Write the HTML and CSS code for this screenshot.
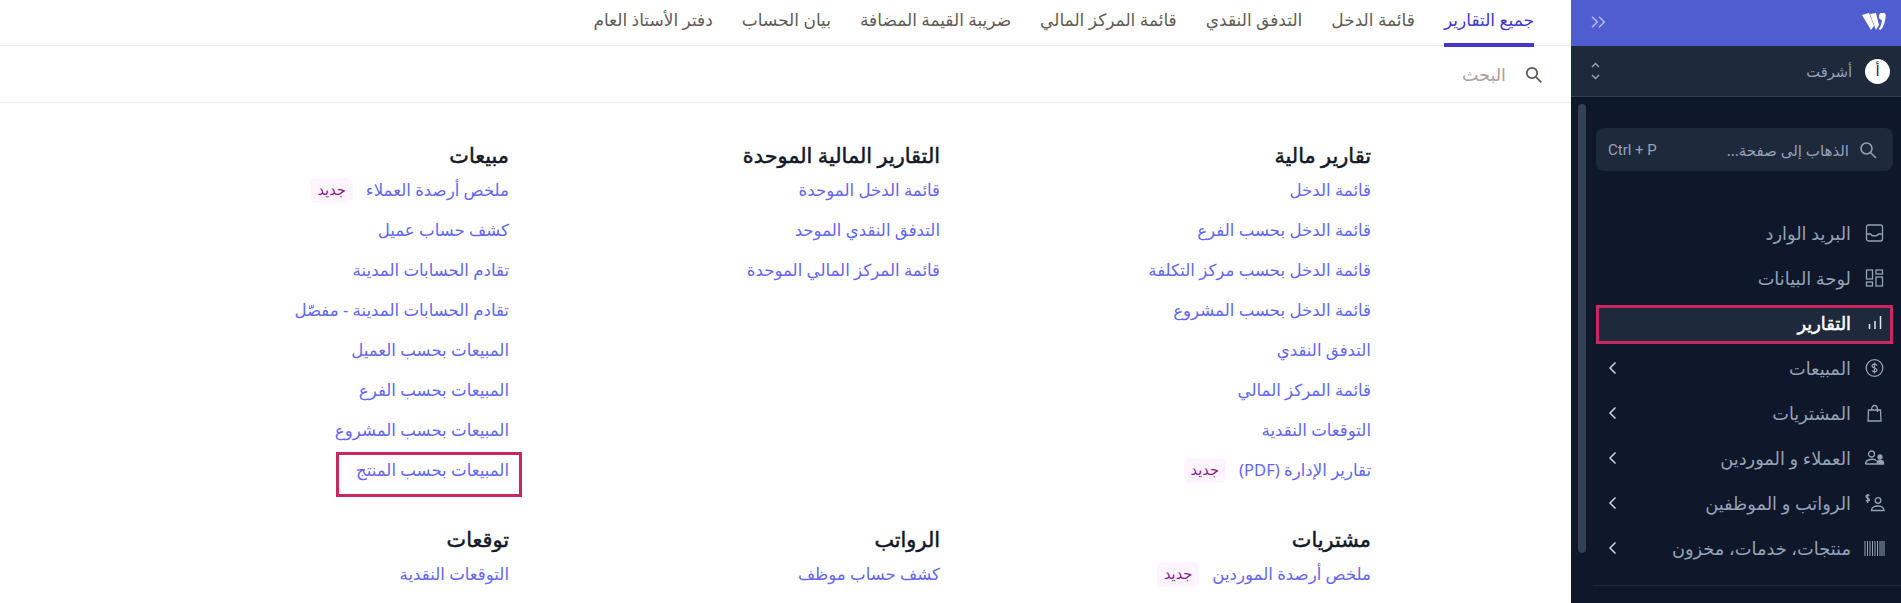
FILE: index.html
```html
<!DOCTYPE html>
<html lang="ar" dir="rtl">
<head>
  <meta charset="UTF-8">
  <meta name="viewport" content="width=device-width, initial-scale=1.0">
  <title>التقارير</title>
  <link rel="stylesheet" href="styles.css">
</head>
<body>
  <aside class="sidebar">
    <div class="brand">
      <svg class="logo" width="24" height="18" viewBox="0 0 24 18" fill="#fff"><path d="M0 2 7 0l5 13-3 4zM8 1l6-1 3 12-3 5zM17 3a3.4 3.4 0 1 1 6.600 1c-.6 5-2 10-5 13l-2-1c2-2 3-5 3.400-9A3.400 3.400 0 0 1 17 3z"/></svg>
      <svg class="collapse" width="15" height="12" viewBox="0 0 15 12" fill="none" stroke="#b4bdf0" stroke-width="1.500"><path d="M1 .7 6.300 6 1 11.300M8 .7 13.300 6 8 11.300"/></svg>
    </div>
    <div class="org">
      <span class="avatar">أ</span>
      <span class="org-name">أشرقت</span>
      <svg class="sort" width="9" height="18" viewBox="0 0 9 18" fill="none" stroke="#94a3b8" stroke-width="1.500"><path d="M1 5l3.500-3.500L8 5M1 13l3.500 3.500L8 13"/></svg>
    </div>
    <div class="side-body">
      <div class="scroll-thumb"></div>
      <div class="goto">
        <svg width="18" height="18" viewBox="0 0 18 18" fill="none" stroke="#94a3b8" stroke-width="1.500"><circle cx="7.500" cy="7.500" r="5.500"/><path d="M11.500 11.500 17 17"/></svg>
        <span class="goto-text">الذهاب إلى صفحة...</span>
        <span class="goto-key">Ctrl + P</span>
      </div>
      <nav class="nav">
        <a class="nav-item">
          <svg width="18" height="18" viewBox="0 0 18 18" fill="none" stroke="#94a3b8" stroke-width="1.300"><rect x="1" y="1" width="16" height="16" rx="2"/><path d="M1 10h4c1 2.500 7 2.500 8 0h4"/></svg>
          <span>البريد الوارد</span>
        </a>
        <a class="nav-item">
          <svg width="18" height="18" viewBox="0 0 18 18" fill="none" stroke="#94a3b8" stroke-width="1.300"><rect x="10.500" y="1" width="6.500" height="4"/><rect x="1" y="1" width="6" height="9"/><rect x="10.500" y="8" width="6.500" height="9"/><rect x="1" y="13" width="6" height="4"/></svg>
          <span>لوحة البيانات</span>
        </a>
        <a class="nav-item active">
          <svg width="18" height="18" viewBox="0 0 18 18" fill="none" stroke="#e2e8f0" stroke-width="1.500"><path d="M15 2v13M9.500 7v8M4 10v5"/></svg>
          <span>التقارير</span>
        </a>
        <a class="nav-item">
          <svg width="18" height="18" viewBox="0 0 18 18" fill="none" stroke="#94a3b8" stroke-width="1.300"><circle cx="9" cy="9" r="8.300"/><path d="M11.500 6.500C11 5 7 4.500 6.500 6.700 6.300 9.500 11.700 8.500 11.500 11.300 11 13.500 7 13 6.500 11.500M9 3.500v11"/></svg>
          <span>المبيعات</span>
          <svg class="chev" width="9" height="14" viewBox="0 0 9 14" fill="none" stroke="#cbd5e1" stroke-width="1.500"><path d="M7.500 1.500 2 7l5.500 5.500"/></svg>
        </a>
        <a class="nav-item">
          <svg width="18" height="18" viewBox="0 0 18 18" fill="none" stroke="#94a3b8" stroke-width="1.300"><path d="M3 6h12l.5 11h-13zM6 6c0-6 6-6 6 0v2M12 6v2"/></svg>
          <span>المشتريات</span>
          <svg class="chev" width="9" height="14" viewBox="0 0 9 14" fill="none" stroke="#cbd5e1" stroke-width="1.500"><path d="M7.500 1.500 2 7l5.500 5.500"/></svg>
        </a>
        <a class="nav-item">
          <svg width="20" height="16" viewBox="0 0 20 16" fill="none" stroke="#94a3b8" stroke-width="1.300"><circle cx="7" cy="4" r="3"/><path d="M1 14c0-5 9-6 11-3M1 14h11"/><circle cx="15.500" cy="7" r="2" fill="#94a3b8"/><path d="M12.500 13c0-3.500 6.500-3.500 6.500 0v1h-6.500z" fill="#94a3b8"/></svg>
          <span>العملاء و الموردين</span>
          <svg class="chev" width="9" height="14" viewBox="0 0 9 14" fill="none" stroke="#cbd5e1" stroke-width="1.500"><path d="M7.500 1.500 2 7l5.500 5.500"/></svg>
        </a>
        <a class="nav-item">
          <svg width="20" height="20" viewBox="0 0 20 20" fill="none" stroke="#94a3b8" stroke-width="1.300"><circle cx="13.500" cy="7.500" r="2.800"/><path d="M7 17.500c0-6 12.500-6 12.500 0z"/><path d="M5 2.500C3.500 1.500 1.500 2 1.500 3.500 1.500 5.500 5 4.500 5 6.700 5 8.300 2.500 8.500 1.300 7.500M3.200 1v9"/></svg>
          <span>الرواتب و الموظفين</span>
          <svg class="chev" width="9" height="14" viewBox="0 0 9 14" fill="none" stroke="#cbd5e1" stroke-width="1.500"><path d="M7.500 1.500 2 7l5.500 5.500"/></svg>
        </a>
        <a class="nav-item">
          <svg width="21" height="15" viewBox="0 0 21 15" fill="none" stroke="#94a3b8" stroke-width="1"><path d="M1 0v15M3.500 0v15M6 0v15M8.500 0v15M11 0v15M13.500 0v15M16 0v15M18 0v15M20 0v15"/></svg>
          <span>منتجات، خدمات، مخزون</span>
          <svg class="chev" width="9" height="14" viewBox="0 0 9 14" fill="none" stroke="#cbd5e1" stroke-width="1.500"><path d="M7.500 1.500 2 7l5.500 5.500"/></svg>
        </a>
      </nav>
      <div class="side-line"></div>
    </div>
  </aside>

  <main class="main">
    <div class="tabs">
      <a class="tab current">جميع التقارير</a>
      <a class="tab">قائمة الدخل</a>
      <a class="tab">التدفق النقدي</a>
      <a class="tab">قائمة المركز المالي</a>
      <a class="tab">ضريبة القيمة المضافة</a>
      <a class="tab">بيان الحساب</a>
      <a class="tab">دفتر الأستاذ العام</a>
    </div>
    <div class="search">
      <svg width="17" height="17" viewBox="0 0 17 17" fill="none" stroke="#57534e" stroke-width="1.700"><circle cx="7" cy="7" r="5.200"/><path d="M11 11l5.300 5.300"/></svg>
      <span>البحث</span>
    </div>
    <div class="reports">
      <section class="group">
        <h3>تقارير مالية</h3>
        <a>قائمة الدخل</a>
        <a>قائمة الدخل بحسب الفرع</a>
        <a>قائمة الدخل بحسب مركز التكلفة</a>
        <a>قائمة الدخل بحسب المشروع</a>
        <a>التدفق النقدي</a>
        <a>قائمة المركز المالي</a>
        <a>التوقعات النقدية</a>
        <a>تقارير الإدارة (PDF) <span class="badge">جديد</span></a>
      </section>
      <section class="group">
        <h3>التقارير المالية الموحدة</h3>
        <a>قائمة الدخل الموحدة</a>
        <a>التدفق النقدي الموحد</a>
        <a>قائمة المركز المالي الموحدة</a>
      </section>
      <section class="group">
        <h3>مبيعات</h3>
        <a>ملخص أرصدة العملاء <span class="badge">جديد</span></a>
        <a>كشف حساب عميل</a>
        <a>تقادم الحسابات المدينة</a>
        <a>تقادم الحسابات المدينة - مفصّل</a>
        <a>المبيعات بحسب العميل</a>
        <a>المبيعات بحسب الفرع</a>
        <a>المبيعات بحسب المشروع</a>
        <a class="marked">المبيعات بحسب المنتج</a>
      </section>
      <section class="group">
        <h3>مشتريات</h3>
        <a>ملخص أرصدة الموردين <span class="badge">جديد</span></a>
      </section>
      <section class="group">
        <h3>الرواتب</h3>
        <a>كشف حساب موظف</a>
      </section>
      <section class="group">
        <h3>توقعات</h3>
        <a>التوقعات النقدية</a>
      </section>
    </div>
  </main>
</body>
</html>
```

FILE: styles.css
```css
* {
  box-sizing: border-box;
}

html, body {
  height: 100%;
}

body {
  margin: 0;
  display: flex;
  overflow: hidden;
  background-color: #fff;
  font-family: "Noto Sans", "DejaVu Sans", sans-serif;
}

/* Sidebar */
.sidebar {
  width: 330px;
  flex-shrink: 0;
  height: 603px;
  background-color: #0f172a;
  display: flex;
  flex-direction: column;
}

.brand {
  height: 46px;
  background-color: #4f5dd1;
  display: flex;
  justify-content: space-between;
  align-items: center;
  padding: 0 15px 3px 20px;
}

.org {
  height: 51px;
  background-color: #1e293b;
  border-bottom: 1px solid #334155;
  display: flex;
  align-items: center;
  padding: 0 11px 0 20px;
}

.avatar {
  width: 25px;
  height: 25px;
  border-radius: 50%;
  background-color: #fff;
  color: #1e293b;
  font-size: 15px;
  line-height: 22px;
  text-align: center;
}

.org-name {
  margin-right: 13px;
  font-size: 14.600px;
  color: #94a3b8;
}

.sort {
  margin-right: auto;
}

.side-body {
  position: relative;
  flex: 1;
  padding: 31px 8px 0 8px;
}

.scroll-thumb {
  position: absolute;
  left: 7px;
  top: 7px;
  width: 8px;
  height: 449px;
  border-radius: 4px;
  background-color: #334155;
}

.goto {
  height: 43px;
  margin-left: 17px;
  padding: 0 16px 0 12px;
  border-radius: 8px;
  background-color: #1e293b;
  display: flex;
  align-items: center;
  color: #94a3b8;
  font-size: 15px;
}

.goto-text {
  margin-right: 10px;
}

.goto-key {
  margin-right: auto;
  font-family: Roboto, sans-serif;
}

.nav {
  margin-top: 44px;
  margin-left: 17px;
  display: flex;
  flex-direction: column;
  gap: 6px;
}

.nav-item {
  height: 39px;
  padding: 0 8px 3px 12px;
  border-radius: 6px;
  display: flex;
  align-items: center;
  color: #94a3b8;
  font-size: 17.800px;
}

.nav-item svg:first-child {
  width: 21px;
  flex-shrink: 0;
}

.nav-item span {
  margin-right: 13px;
}

.nav-item .chev {
  margin-right: auto;
}

.nav-item.active {
  position: relative;
  background-color: #1e293b;
  color: #fff;
  -webkit-text-stroke: 0.5px #fff;
}

/* red box from the screenshot annotation */
.nav-item.active::after {
  content: "";
  position: absolute;
  inset: 0;
  border: 3px solid #c9285f;
}

.side-line {
  height: 1px;
  margin: 16px -8px 0 14px;
  background-color: #1e293b;
}

/* Main */
.main {
  flex: 1;
  min-width: 0;
}

.tabs {
  height: 46px;
  padding: 0 37px 0 0;
  border-bottom: 1px solid #ececec;
  display: flex;
  gap: 29px;
}

.tab {
  height: 47px;
  padding-top: 8px;
  font-size: 17px;
  line-height: 24px;
  color: #5f5a56;
}

.tab.current {
  color: #4338ca;
  border-bottom: 4px solid #4338ca;
}

.search {
  height: 57px;
  padding: 0 29px 0 0;
  border-bottom: 1px solid #ececec;
  display: flex;
  align-items: center;
  gap: 19px;
  color: #a8a29e;
  font-size: 17.500px;
}

.reports {
  padding: 38px 200px 0 0;
  display: grid;
  grid-template-columns: repeat(3, 431px);
  row-gap: 43px;
}

.group {
  display: flex;
  flex-direction: column;
  align-items: flex-start;
  gap: 16px;
}

.group h3 {
  margin: 0 0 -7px 0;
  font-size: 20.800px;
  line-height: 28px;
  font-weight: 400;
  -webkit-text-stroke: 0.5px #111827;
  color: #111827;
}

.group a {
  height: 24px;
  display: flex;
  align-items: center;
  gap: 13px;
  font-size: 16.600px;
  line-height: 24px;
  color: #6366f1;
}

.badge {
  height: 25px;
  padding: 0 7px;
  border-radius: 6px;
  background-color: #fdf4ff;
  color: #86198f;
  font-size: 14.600px;
  line-height: 23px;
}

.group a.marked {
  position: relative;
}

.group a.marked::after {
  content: "";
  position: absolute;
  inset: -6px -13px -15px -20px;
  border: 3px solid #c9285f;
}
```
